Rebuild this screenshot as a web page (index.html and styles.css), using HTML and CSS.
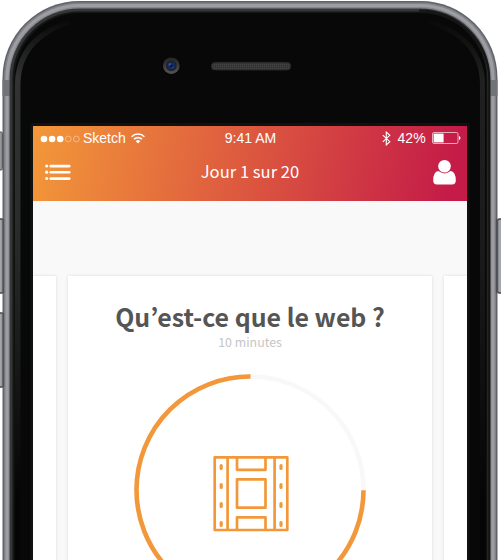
FILE: index.html
```html
<!DOCTYPE html>
<html lang="fr">
<head>
<meta charset="utf-8">
<title>Jour 1 sur 20</title>
<link rel="stylesheet" href="styles.css">
</head>
<body>
<div class="device">
  <svg class="frame" viewBox="0 0 501 560" aria-hidden="true">
    <defs>
      <linearGradient id="key" x1="0" x2="1" y1="0" y2="0"><stop offset="0" stop-color="#cfd0d2"/><stop offset=".5" stop-color="#b2b3b7"/><stop offset="1" stop-color="#77787d"/></linearGradient>
      <linearGradient id="glow" x1="0" x2="0" y1="20" y2="500" gradientUnits="userSpaceOnUse"><stop offset="0" stop-color="#0a0909"/><stop offset=".12" stop-color="#323434"/><stop offset=".45" stop-color="#292b2b"/><stop offset="1" stop-color="#050505"/></linearGradient>
      <linearGradient id="glowR" x1="0" x2="0" y1="20" y2="500" gradientUnits="userSpaceOnUse"><stop offset="0" stop-color="#0a0909"/><stop offset=".12" stop-color="#202020"/><stop offset=".45" stop-color="#1b1b1b"/><stop offset="1" stop-color="#050505"/></linearGradient>
      <linearGradient id="ring" x1="0" x2="0" y1="0" y2="1"><stop offset="0" stop-color="#242424"/><stop offset="1" stop-color="#555"/></linearGradient>
      <pattern id="mesh" width="2" height="2" patternUnits="userSpaceOnUse"><rect width="2" height="2" fill="#383838"/><rect width="1" height="1" fill="#434343"/><rect x="1" y="1" width="1" height="1" fill="#303030"/></pattern>
    </defs>
    <rect x="-5" y="132" width="7.500" height="38" rx="1.500" fill="url(#key)" stroke="#55565a"/>
    <rect x="-5" y="219" width="9" height="74" rx="2" fill="url(#key)" stroke="#46474b" stroke-width="1.500"/>
    <rect x="-5" y="313" width="9" height="74" rx="2" fill="url(#key)" stroke="#46474b" stroke-width="1.500"/>
    <rect x="497.500" y="219" width="9" height="74" rx="2" fill="#a4a5aa" stroke="#46474b" stroke-width="1.500"/>
    <rect x="2.500" y="1" width="495" height="700" rx="77" fill="#626369"/>
    <rect x="4" y="2.500" width="492" height="700" rx="75.500" fill="#808187"/>
    <rect x="5.500" y="4" width="489" height="700" rx="74" fill="#9d9ea4"/>
    <rect x="8.500" y="7" width="483" height="700" rx="71.500" fill="#85868b"/>
    <path d="M2.500 80H10v16H2.500zM490 80h7.500v16H490z" fill="#727378"/>
    <path d="M3.400 219V293M3.400 313V387M496.600 219V293" stroke="#505156" stroke-width="1.600"/>
    <rect x="9.600" y="8.500" width="480.800" height="700" rx="70" fill="#353636"/>
    <rect x="12.500" y="11.500" width="475" height="700" rx="67" fill="#151616"/>
    <path d="M489.200 560V80a70 70 0 0 0-70-69.500" fill="none" stroke="#141414" stroke-width="2"/>
    <rect x="14.500" y="13" width="472" height="700" rx="66" fill="#090808"/>
    <path d="M70 21.500Q17.700 39 17.700 85V560" fill="none" stroke="url(#glow)" stroke-width="5.500"/>
    <path d="M430 21.500Q482.500 39 482.500 85V560" fill="none" stroke="url(#glowR)" stroke-width="5"/>
    <rect x="30.500" y="123" width="439" height="500" rx="2" fill="#101212"/>
    <circle cx="171.300" cy="65.700" r="8.300" fill="url(#ring)"/>
    <circle cx="171.300" cy="65.700" r="5.300" fill="#202022"/>
    <circle cx="171.300" cy="65.700" r="4" fill="#172958"/>
    <circle cx="170" cy="64.500" r="1.600" fill="#2850a0"/>
    <circle cx="172.500" cy="67" r="1.200" fill="#2448a0"/>
    <circle cx="171.500" cy="66" r="1.200" fill="#080d20"/>
    <rect x="211.300" y="62.300" width="79.500" height="7.800" rx="3.900" fill="url(#mesh)" stroke="#242424" stroke-width=".8"/>
  </svg>
  <main class="screen">
    <header class="header">
      <div class="status">
        <div class="carrier">
          <svg class="dots" width="40" height="8" viewBox="0 0 40 8"><g fill="#fff"><circle cx="4" cy="4" r="3.300"/><circle cx="12.100" cy="4" r="3.300"/><circle cx="20.200" cy="4" r="3.300"/></g><g fill="none" stroke="#fff" stroke-opacity=".65" stroke-width=".6"><circle cx="28.300" cy="4" r="2.900"/><circle cx="36.400" cy="4" r="2.900"/></g></svg>
          <span>Sketch</span>
          <svg class="wifi" width="14" height="11" viewBox="0 0 14 11"><g fill="none" stroke="#fff" stroke-width="1.600"><path d="M.6 3.700a9 9 0 0 1 12.800 0"/><path d="M3 6.300a5.700 5.700 0 0 1 8 0"/></g><path d="M4.700 8.200a3.300 3.300 0 0 1 4.600 0L7 10.500z" fill="#fff"/></svg>
        </div>
        <span class="clock">9:41 AM</span>
        <div class="power">
          <svg width="9" height="15" viewBox="0 0 9 15"><path d="M.8 4.200l7 6.500-3.500 3.200V1.100l3.500 3.200-7 6.500" fill="none" stroke="#fff" stroke-width="1.100"/></svg>
          <span class="percent">42%</span>
          <svg class="battery" width="29" height="12" viewBox="0 0 29 12"><rect x=".5" y=".5" width="25.500" height="11" rx="1.500" fill="none" stroke="#fff" stroke-opacity=".8" stroke-width=".8"/><rect x="1.600" y="1.600" width="10" height="8.800" fill="#fff"/><path d="M27 4v4q1.500-.4 1.500-2T27 4" fill="#fff"/></svg>
        </div>
      </div>
      <nav class="nav">
        <svg class="menu" width="26" height="17" viewBox="0 0 26 17"><g fill="#fff"><circle cx="1.700" cy="2" r="1.600"/><circle cx="1.700" cy="8.200" r="1.600"/><circle cx="1.700" cy="14.500" r="1.600"/><rect x="4.500" y=".7" width="21" height="2.700" rx="1.200"/><rect x="4.500" y="6.900" width="21" height="2.700" rx="1.200"/><rect x="4.500" y="13.200" width="21" height="2.700" rx="1.200"/></g></svg>
        <span class="day">Jour 1 sur 20</span>
        <svg class="user" width="23" height="25" viewBox="0 0 23 25"><path d="M5.500 11Q.2 11.700.2 20.500.2 24.500 4 24.500H19Q22.800 24.500 22.800 20.500 22.800 11.700 17.500 11 11.500 15.800 5.500 11Z" fill="#fff"/><circle cx="11.500" cy="6.300" r="6.300" fill="#fff"/></svg>
      </nav>
    </header>
    <div class="deck">
      <section class="card"></section>
      <section class="card current">
        <h1>Qu’est-ce que le web ?</h1>
        <p>10 minutes</p>
        <svg class="progress" width="234" height="234" viewBox="-117 -117 234 234">
          <circle r="113.500" fill="none" stroke="#f8f8f8" stroke-width="4.500"/>
          <path d="M.5-113.500A113.500 113.500 0 1 0 113.500.3" fill="none" stroke="#f3983a" stroke-width="4.600"/>
          <g transform="translate(-36.700 -34)" fill="none" stroke="#f3983a" stroke-width="2.700" stroke-linejoin="round">
            <path d="M1.400 1.400H74V74H1.400zM14.300 1.400V74M61.300 1.400V74M23.700 1.400V13.800H52.200V1.400M23.700 74V61.300H52.200V74M23.700 23.300H52.200V51.700H23.700z"/>
            <g stroke-linecap="round" stroke-width="3.200"><path d="M7.900 9.500v3M7.900 28.500v3M7.900 47.500v3M7.900 66.500v3M67.700 9.500v3M67.700 28.500v3M67.700 47.500v3M67.700 66.500v3"/></g>
          </g>
        </svg>
      </section>
      <section class="card"></section>
    </div>
  </main>
</div>
</body>
</html>
```
FILE: styles.css
```css
* { box-sizing: border-box; }
body { margin: 0; background: #fff; overflow: hidden; }
svg { display: block; flex: none; }
.device {
  position: relative;
  width: 501px;
  height: 560px;
  padding: 126px 34px 0 33px;
  overflow: hidden;
  font-family: "Noto Sans CJK KR", "Noto Sans", sans-serif;
}
.frame { position: absolute; left: 0; top: 0; width: 501px; height: 560px; }
.screen { position: relative; height: 434px; background: #f9f9f9; overflow: hidden; }
.header { height: 75px; background: linear-gradient(100deg, #f39839 0%, #dc573f 50%, #c41b48 96%); color: #fff; }
.status {
  display: grid;
  grid-template-columns: 1fr auto 1fr;
  align-items: center;
  height: 25px;
  padding: 0 6px 0 7px;
  font: 14px/25px "Liberation Sans", Arial, sans-serif;
}
.carrier, .power { display: flex; align-items: center; }
.carrier span { margin-left: 3px; }
.wifi { margin-left: 5px; }
.power { justify-content: flex-end; }
.percent { margin: 0 6px 0 6px; letter-spacing: .2px; }
.battery { margin-top: -1px; }
.nav {
  display: grid;
  grid-template-columns: 1fr auto 1fr;
  align-items: center;
  height: 42px;
  padding: 0 11px 0 12px;
}
.day { margin: -2px 1px 0 0; font-size: 16.6px; line-height: 24px; }
.user { justify-self: end; margin-top: 1px; }
.deck {
  display: grid;
  grid-template-columns: 364px 364px 364px;
  gap: 12px;
  height: 359px;
  margin-left: -341px;
  padding-top: 75px;
}
.card { height: 400px; background: #fff; box-shadow: 0 0 3px rgba(0, 0, 0, .13); }
.current { display: flex; flex-direction: column; align-items: center; }
h1 { margin: 21px 0 0; color: #555; font-size: 24.9px; line-height: 38px; font-weight: 700; white-space: nowrap; }
p { margin: -1px 0 0; color: #c5c5c5; font-size: 12.4px; line-height: 16px; }
.progress { margin: 23px 1px 0 0; }
```
